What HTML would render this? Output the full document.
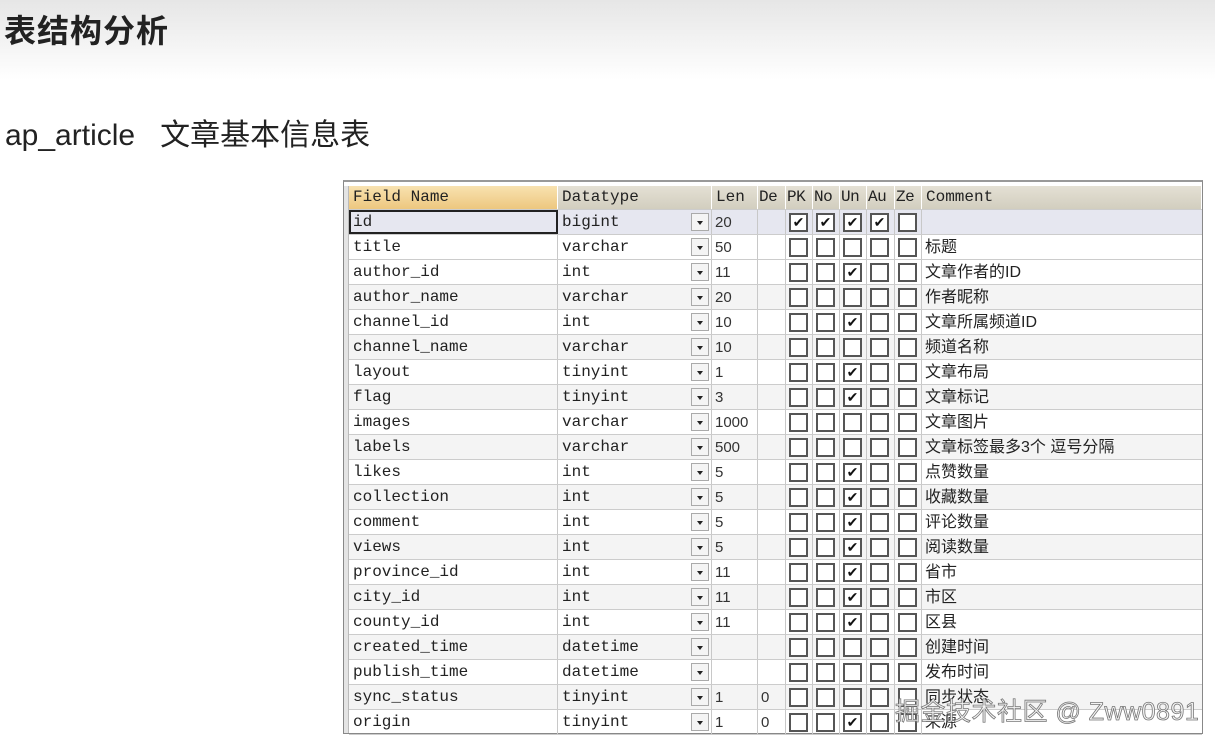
<!DOCTYPE html>
<html><head><meta charset="utf-8"><style>
*{margin:0;padding:0;box-sizing:border-box}
body{width:1215px;height:744px;overflow:hidden;background:#fff;position:relative;font-family:"Liberation Sans","Noto Sans CJK SC",sans-serif}
.bg{position:absolute;left:0;top:0;width:1215px;height:80px;background:linear-gradient(#e6e6e6,#fff)}
h1{position:absolute;left:4px;top:6px;font-size:32px;font-weight:bold;color:#222;letter-spacing:1px}
.sub{position:absolute;left:5px;top:110px;font-size:30px;color:#222}
.tbl{position:absolute;left:343px;top:180px;width:860px;height:554px;border:1px solid #888;border-top:2px solid #999;background:#fff}
.stripe{position:absolute;left:0;top:4px;width:5px;bottom:0;background:#e4e4e4;border-right:1px solid #bbb}
.r{position:absolute;left:5px;height:25px;display:flex;width:853px;border-bottom:1px solid #ccc}
.c{border-right:1px solid #c8c8c8;height:100%;position:relative;font-size:16px;line-height:25px;white-space:nowrap;overflow:hidden}
.m{font-family:"Liberation Mono",monospace;padding-left:4px;color:#222}
.s{font-family:"Liberation Sans",sans-serif;padding-left:3px;color:#333;font-size:15px}
.w1{width:209px}.w2{width:154px}.w3{width:46px}.w4{width:28px}.wb{width:27px}.wc{flex:1;border-right:none;font-family:"Liberation Sans","Noto Sans CJK SC",sans-serif;padding-left:3px;color:#222;font-size:16px}
.h .c{font-family:"Liberation Mono",monospace;font-size:16px;line-height:23px;padding-left:4px;background:linear-gradient(#e4e0d4,#d2cebf);color:#222;border-right:1px solid #fff}
.h .c.f{background:linear-gradient(#f8e2b0,#edc77f)}
.h .c.b{padding-left:1px;letter-spacing:-0.5px}
.dd{position:absolute;right:2px;top:3px;width:18px;height:18px;border:1px solid #aaa;background:#f4f4f4}
.dd:after{content:"";position:absolute;left:5px;top:7px;border-left:3px solid transparent;border-right:3px solid transparent;border-top:4px solid #222}
.cb{position:absolute;left:3px;top:3px;width:19px;height:19px;border:2px solid #555;background:#fff;font-size:14px;line-height:15px;text-align:center;color:#111}
.g{background:#f4f4f4}
.sel{background:#e6e7f0}
.sel .w1{outline:2px solid #222;outline-offset:-2px}
.wm{position:absolute;left:895px;top:692px;font-size:25px;color:#f4f4f4;-webkit-text-stroke:0.8px #777;font-family:"Liberation Sans","Noto Sans CJK SC",sans-serif;letter-spacing:0.5px}
</style></head><body>
<div class="bg"></div>
<h1>表结构分析</h1>
<div class="sub">ap_article&nbsp;&nbsp;&nbsp;文章基本信息表</div>
<div class="tbl">
<div class="stripe"></div>
<div class="r h" style="top:4px;height:24px"><div class="c w1 f">Field Name</div><div class="c w2">Datatype</div><div class="c w3">Len</div><div class="c w4 b">De</div><div class="c wb b">PK</div><div class="c wb b">No</div><div class="c wb b">Un</div><div class="c w4 b">Au</div><div class="c wb b">Ze</div><div class="c wc" style="font-family:'Liberation Mono',monospace">Comment</div></div>

<div class="r sel" style="top:28px"><div class="c w1 m">id</div><div class="c w2 m">bigint<span class="dd"></span></div><div class="c w3 s">20</div><div class="c w4 s"></div><div class="c wb"><span class="cb">✔</span></div><div class="c wb"><span class="cb">✔</span></div><div class="c wb"><span class="cb">✔</span></div><div class="c w4"><span class="cb">✔</span></div><div class="c wb"><span class="cb"></span></div><div class="c wc"></div></div>
<div class="r" style="top:53px"><div class="c w1 m">title</div><div class="c w2 m">varchar<span class="dd"></span></div><div class="c w3 s">50</div><div class="c w4 s"></div><div class="c wb"><span class="cb"></span></div><div class="c wb"><span class="cb"></span></div><div class="c wb"><span class="cb"></span></div><div class="c w4"><span class="cb"></span></div><div class="c wb"><span class="cb"></span></div><div class="c wc">标题</div></div>
<div class="r" style="top:78px"><div class="c w1 m">author_id</div><div class="c w2 m">int<span class="dd"></span></div><div class="c w3 s">11</div><div class="c w4 s"></div><div class="c wb"><span class="cb"></span></div><div class="c wb"><span class="cb"></span></div><div class="c wb"><span class="cb">✔</span></div><div class="c w4"><span class="cb"></span></div><div class="c wb"><span class="cb"></span></div><div class="c wc">文章作者的ID</div></div>
<div class="r g" style="top:103px"><div class="c w1 m">author_name</div><div class="c w2 m">varchar<span class="dd"></span></div><div class="c w3 s">20</div><div class="c w4 s"></div><div class="c wb"><span class="cb"></span></div><div class="c wb"><span class="cb"></span></div><div class="c wb"><span class="cb"></span></div><div class="c w4"><span class="cb"></span></div><div class="c wb"><span class="cb"></span></div><div class="c wc">作者昵称</div></div>
<div class="r" style="top:128px"><div class="c w1 m">channel_id</div><div class="c w2 m">int<span class="dd"></span></div><div class="c w3 s">10</div><div class="c w4 s"></div><div class="c wb"><span class="cb"></span></div><div class="c wb"><span class="cb"></span></div><div class="c wb"><span class="cb">✔</span></div><div class="c w4"><span class="cb"></span></div><div class="c wb"><span class="cb"></span></div><div class="c wc">文章所属频道ID</div></div>
<div class="r g" style="top:153px"><div class="c w1 m">channel_name</div><div class="c w2 m">varchar<span class="dd"></span></div><div class="c w3 s">10</div><div class="c w4 s"></div><div class="c wb"><span class="cb"></span></div><div class="c wb"><span class="cb"></span></div><div class="c wb"><span class="cb"></span></div><div class="c w4"><span class="cb"></span></div><div class="c wb"><span class="cb"></span></div><div class="c wc">频道名称</div></div>
<div class="r" style="top:178px"><div class="c w1 m">layout</div><div class="c w2 m">tinyint<span class="dd"></span></div><div class="c w3 s">1</div><div class="c w4 s"></div><div class="c wb"><span class="cb"></span></div><div class="c wb"><span class="cb"></span></div><div class="c wb"><span class="cb">✔</span></div><div class="c w4"><span class="cb"></span></div><div class="c wb"><span class="cb"></span></div><div class="c wc">文章布局</div></div>
<div class="r g" style="top:203px"><div class="c w1 m">flag</div><div class="c w2 m">tinyint<span class="dd"></span></div><div class="c w3 s">3</div><div class="c w4 s"></div><div class="c wb"><span class="cb"></span></div><div class="c wb"><span class="cb"></span></div><div class="c wb"><span class="cb">✔</span></div><div class="c w4"><span class="cb"></span></div><div class="c wb"><span class="cb"></span></div><div class="c wc">文章标记</div></div>
<div class="r" style="top:228px"><div class="c w1 m">images</div><div class="c w2 m">varchar<span class="dd"></span></div><div class="c w3 s">1000</div><div class="c w4 s"></div><div class="c wb"><span class="cb"></span></div><div class="c wb"><span class="cb"></span></div><div class="c wb"><span class="cb"></span></div><div class="c w4"><span class="cb"></span></div><div class="c wb"><span class="cb"></span></div><div class="c wc">文章图片</div></div>
<div class="r g" style="top:253px"><div class="c w1 m">labels</div><div class="c w2 m">varchar<span class="dd"></span></div><div class="c w3 s">500</div><div class="c w4 s"></div><div class="c wb"><span class="cb"></span></div><div class="c wb"><span class="cb"></span></div><div class="c wb"><span class="cb"></span></div><div class="c w4"><span class="cb"></span></div><div class="c wb"><span class="cb"></span></div><div class="c wc">文章标签最多3个 逗号分隔</div></div>
<div class="r" style="top:278px"><div class="c w1 m">likes</div><div class="c w2 m">int<span class="dd"></span></div><div class="c w3 s">5</div><div class="c w4 s"></div><div class="c wb"><span class="cb"></span></div><div class="c wb"><span class="cb"></span></div><div class="c wb"><span class="cb">✔</span></div><div class="c w4"><span class="cb"></span></div><div class="c wb"><span class="cb"></span></div><div class="c wc">点赞数量</div></div>
<div class="r g" style="top:303px"><div class="c w1 m">collection</div><div class="c w2 m">int<span class="dd"></span></div><div class="c w3 s">5</div><div class="c w4 s"></div><div class="c wb"><span class="cb"></span></div><div class="c wb"><span class="cb"></span></div><div class="c wb"><span class="cb">✔</span></div><div class="c w4"><span class="cb"></span></div><div class="c wb"><span class="cb"></span></div><div class="c wc">收藏数量</div></div>
<div class="r" style="top:328px"><div class="c w1 m">comment</div><div class="c w2 m">int<span class="dd"></span></div><div class="c w3 s">5</div><div class="c w4 s"></div><div class="c wb"><span class="cb"></span></div><div class="c wb"><span class="cb"></span></div><div class="c wb"><span class="cb">✔</span></div><div class="c w4"><span class="cb"></span></div><div class="c wb"><span class="cb"></span></div><div class="c wc">评论数量</div></div>
<div class="r g" style="top:353px"><div class="c w1 m">views</div><div class="c w2 m">int<span class="dd"></span></div><div class="c w3 s">5</div><div class="c w4 s"></div><div class="c wb"><span class="cb"></span></div><div class="c wb"><span class="cb"></span></div><div class="c wb"><span class="cb">✔</span></div><div class="c w4"><span class="cb"></span></div><div class="c wb"><span class="cb"></span></div><div class="c wc">阅读数量</div></div>
<div class="r" style="top:378px"><div class="c w1 m">province_id</div><div class="c w2 m">int<span class="dd"></span></div><div class="c w3 s">11</div><div class="c w4 s"></div><div class="c wb"><span class="cb"></span></div><div class="c wb"><span class="cb"></span></div><div class="c wb"><span class="cb">✔</span></div><div class="c w4"><span class="cb"></span></div><div class="c wb"><span class="cb"></span></div><div class="c wc">省市</div></div>
<div class="r g" style="top:403px"><div class="c w1 m">city_id</div><div class="c w2 m">int<span class="dd"></span></div><div class="c w3 s">11</div><div class="c w4 s"></div><div class="c wb"><span class="cb"></span></div><div class="c wb"><span class="cb"></span></div><div class="c wb"><span class="cb">✔</span></div><div class="c w4"><span class="cb"></span></div><div class="c wb"><span class="cb"></span></div><div class="c wc">市区</div></div>
<div class="r" style="top:428px"><div class="c w1 m">county_id</div><div class="c w2 m">int<span class="dd"></span></div><div class="c w3 s">11</div><div class="c w4 s"></div><div class="c wb"><span class="cb"></span></div><div class="c wb"><span class="cb"></span></div><div class="c wb"><span class="cb">✔</span></div><div class="c w4"><span class="cb"></span></div><div class="c wb"><span class="cb"></span></div><div class="c wc">区县</div></div>
<div class="r g" style="top:453px"><div class="c w1 m">created_time</div><div class="c w2 m">datetime<span class="dd"></span></div><div class="c w3 s"></div><div class="c w4 s"></div><div class="c wb"><span class="cb"></span></div><div class="c wb"><span class="cb"></span></div><div class="c wb"><span class="cb"></span></div><div class="c w4"><span class="cb"></span></div><div class="c wb"><span class="cb"></span></div><div class="c wc">创建时间</div></div>
<div class="r" style="top:478px"><div class="c w1 m">publish_time</div><div class="c w2 m">datetime<span class="dd"></span></div><div class="c w3 s"></div><div class="c w4 s"></div><div class="c wb"><span class="cb"></span></div><div class="c wb"><span class="cb"></span></div><div class="c wb"><span class="cb"></span></div><div class="c w4"><span class="cb"></span></div><div class="c wb"><span class="cb"></span></div><div class="c wc">发布时间</div></div>
<div class="r g" style="top:503px"><div class="c w1 m">sync_status</div><div class="c w2 m">tinyint<span class="dd"></span></div><div class="c w3 s">1</div><div class="c w4 s">0</div><div class="c wb"><span class="cb"></span></div><div class="c wb"><span class="cb"></span></div><div class="c wb"><span class="cb"></span></div><div class="c w4"><span class="cb"></span></div><div class="c wb"><span class="cb"></span></div><div class="c wc">同步状态</div></div>
<div class="r" style="top:528px"><div class="c w1 m">origin</div><div class="c w2 m">tinyint<span class="dd"></span></div><div class="c w3 s">1</div><div class="c w4 s">0</div><div class="c wb"><span class="cb"></span></div><div class="c wb"><span class="cb"></span></div><div class="c wb"><span class="cb">✔</span></div><div class="c w4"><span class="cb"></span></div><div class="c wb"><span class="cb"></span></div><div class="c wc">来源</div></div>
</div>
<div class="wm">掘金技术社区 @ Zww0891</div>
</body></html>
